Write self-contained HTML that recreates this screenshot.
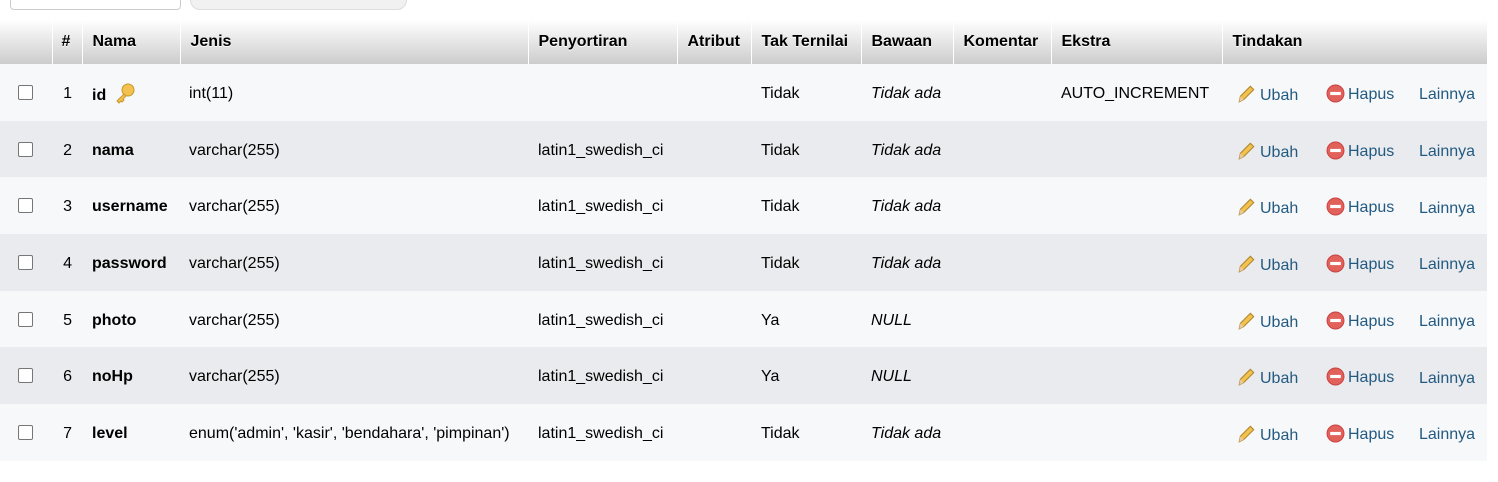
<html><head><style>
body{margin:0;width:1498px;height:482px;background:#fff;font-family:"Liberation Sans",Arial,sans-serif;font-size:15.3px;color:#000;position:relative;overflow:hidden}
.inp{position:absolute;left:10px;top:-10px;width:169px;height:18px;border:1px solid #ccc;border-radius:4px;background:#fff}
.pill{position:absolute;left:190px;top:-10px;width:215px;height:18px;border:1px solid #ddd;border-radius:10px;background:#f1f1f1}
table{position:absolute;left:0;top:20px;border-collapse:collapse;width:1487px;table-layout:fixed}
th{height:44px;background:linear-gradient(#fff,#ccc);text-align:left;font-weight:bold;padding:0 0 0 10px;border-left:1px solid #fff;text-shadow:0 1px 0 #fff;vertical-align:middle}
th:first-child{border-left:none}
td{height:56.7px;padding:3px 0 0 10px;box-sizing:border-box;white-space:nowrap;vertical-align:middle}
tr:nth-child(odd) td{background:#f7f8fa}
tr:nth-child(even) td{background:#eaebee}
.cb{display:inline-block;width:13px;height:13px;border:1px solid #767676;border-radius:2px;background:#fff;margin-left:18px;vertical-align:-1px}
.n{text-align:right;padding-right:10px}
b{font-weight:bold}
.a{color:#235a81}
i{font-style:italic}
.ic{display:inline-block;vertical-align:-4px;margin-right:3px}
</style></head><body>
<div class="inp"></div><div class="pill"></div>
<table>
<colgroup><col style="width:52px"><col style="width:30px"><col style="width:98px"><col style="width:348px"><col style="width:149px"><col style="width:74px"><col style="width:110px"><col style="width:92px"><col style="width:98px"><col style="width:171px"><col style="width:89px"><col style="width:91px"><col style="width:85px"></colgroup>
<tr><th></th><th style="padding-left:9px">#</th><th>Nama</th><th>Jenis</th><th>Penyortiran</th><th>Atribut</th><th>Tak Ternilai</th><th>Bawaan</th><th>Komentar</th><th>Ekstra</th><th colspan="3">Tindakan</th></tr>
<tbody id="b"></tbody>
</table>
<script>
var P='<svg class="ic" width="21" height="21" viewBox="0 0 19 19"><path d="M3 17l1-5L13 3l3 3-9 9z" fill="#f2c14e" stroke="#b08830"/><path d="M3 17l1-5 3 3z" fill="#e8c9a0"/></svg>';
var H='<svg class="ic" width="19" height="19" viewBox="0 0 18 18"><circle cx="9" cy="9" r="8" fill="#e0625a" stroke="#c44"/><rect x="4" y="7.5" width="10" height="3" fill="#fff"/></svg>';
var K='<svg style="vertical-align:-4px;margin-left:8px" width="22" height="22" viewBox="0 0 22 22"><circle cx="14" cy="8" r="6" fill="#f2c14e" stroke="#c9982f"/><path d="M10 12l-7 7 2 2 2-2 1 1 2-2-1-1 3-3z" fill="#f2c14e" stroke="#c9982f"/></svg>';
var r=[["id","int(11)","","Tidak","Tidak ada",1],["nama","varchar(255)","latin1_swedish_ci","Tidak","Tidak ada"],["username","varchar(255)","latin1_swedish_ci","Tidak","Tidak ada"],["password","varchar(255)","latin1_swedish_ci","Tidak","Tidak ada"],["photo","varchar(255)","latin1_swedish_ci","Ya","NULL"],["noHp","varchar(255)","latin1_swedish_ci","Ya","NULL"],["level","enum('admin', 'kasir', 'bendahara', 'pimpinan')","latin1_swedish_ci","Tidak","Tidak ada"]];
var s='';r.forEach(function(x,i){s+='<tr><td style="padding:0"><span class="cb"></span></td><td class="n">'+(i+1)+'</td><td><b>'+x[0]+'</b>'+(x[5]?K:'')+'</td><td style="padding-left:9px">'+x[1]+'</td><td>'+x[2]+'</td><td></td><td>'+x[3]+'</td><td><i>'+x[4]+'</i></td><td></td><td>'+(x[5]?'AUTO_INCREMENT':'')+'</td><td style="padding-left:14px" class="a">'+P+'Ubah</td><td style="padding-left:15px" class="a">'+H+'Hapus</td><td class="a" style="padding-left:17px;padding-top:6px">Lainnya</td></tr>'});
document.getElementById('b').innerHTML=s;
</script>
</body></html>
